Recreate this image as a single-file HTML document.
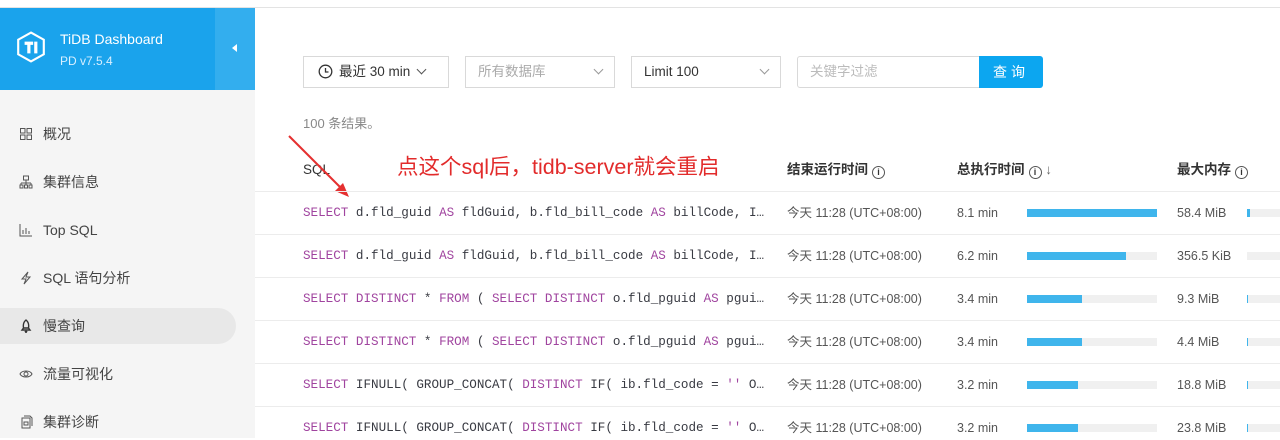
<!DOCTYPE html>
<html><head><meta charset="utf-8"><style>
*{box-sizing:border-box;margin:0;padding:0}
body{width:1280px;height:438px;overflow:hidden;background:#fff;font-family:"Liberation Sans","Noto Sans CJK SC",sans-serif;position:relative;color:#333}
.topline{position:absolute;left:0;top:0;width:1280px;height:8px;border-bottom:1px solid #e3e3e3;background:#fff}
.side{position:absolute;left:0;top:8px;width:255px;height:430px;background:#f5f5f5}
.hdr{position:absolute;left:0;top:0;width:255px;height:82px;background:#1aa3ec}
.hdr .col{position:absolute;left:215px;top:0;width:40px;height:82px;background:#33aeee}
.hdr .col:after{content:"";position:absolute;left:17px;top:36px;border-right:5px solid #fff;border-top:4px solid transparent;border-bottom:4px solid transparent}
.t1{position:absolute;left:60px;top:23px;color:#fff;font-size:14px}
.t2{position:absolute;left:60px;top:46px;color:#d8efff;font-size:12px}
.logo{position:absolute;left:16px;top:23px}
.item{position:absolute;left:0;width:236px;height:36px;font-size:14px;color:#444;line-height:36px;padding-left:43px}
.item.act{background:#e8e8e8;border-radius:0 18px 18px 0}
.ic{position:absolute;left:19px;top:11px;width:14px;height:14px}
.box{position:absolute;top:56px;height:32px;border:1px solid #d9d9d9;font-size:13.5px;line-height:30px;padding-left:12px;color:#333}
.chev{position:absolute;right:12px;top:9px;width:7px;height:7px;border-right:1px solid #999;border-bottom:1px solid #999;transform:rotate(45deg)}
.btn{position:absolute;left:979px;top:56px;width:64px;height:32px;background:#0ca6f0;color:#fff;font-size:14px;line-height:32px;text-align:center;border-radius:0 3px 3px 0;letter-spacing:4px}
.res{position:absolute;left:303px;top:113px;font-size:13px;color:#888}
.th{position:absolute;top:161px;font-size:13.5px;line-height:18px;font-weight:bold;color:#333}
.hline{position:absolute;left:255px;width:1025px;height:1px;background:#ececec}
.sql{position:absolute;left:303px;font-family:"Liberation Mono",monospace;font-size:12.6px;line-height:16px;color:#383a42;white-space:pre}
.k{color:#a0449f}
.c{position:absolute;font-size:12.5px;line-height:16px;color:#555}
.bar{position:absolute;height:8px;background:#f0f0f0}
.bar i{position:absolute;left:0;top:0;height:8px;background:#3fb5ec}
.info{display:inline-block;width:13px;height:13px;border:1.3px solid #555;border-radius:50%;font-size:9px;line-height:10px;text-align:center;font-weight:bold;vertical-align:-1px;margin-left:4px}
.ann{position:absolute;left:397px;top:153px;color:#e22b2b;font-size:21.5px;line-height:28px}
</style></head><body>
<div class="topline"></div>
<div class="side">
 <div class="hdr">
  <svg class="logo" width="30" height="32" viewBox="0 0 28 30"><path d="M14 1.5 26 8.2v13.6L14 28.5 2 21.8V8.2z" fill="none" stroke="#fff" stroke-width="2"/><path d="M8 10h8v3h-2.5v8h-3v-8H8zM17 10h3v11h-3z" fill="#fff"/></svg>
  <div class="t1">TiDB Dashboard</div><div class="t2">PD v7.5.4</div>
  <div class="col"></div>
 </div>
 <div class="item" style="top:108px"><svg class="ic" viewBox="0 0 14 14" fill="none" stroke="#555"><rect x="1.5" y="1.5" width="4.5" height="4.5"/><rect x="8" y="1.5" width="4.5" height="4.5"/><rect x="1.5" y="8" width="4.5" height="4.5"/><rect x="8" y="8" width="4.5" height="4.5"/></svg>概况</div>
 <div class="item" style="top:156px"><svg class="ic" viewBox="0 0 14 14" fill="none" stroke="#555"><rect x="4.5" y="1" width="5" height="4"/><path d="M7 5v3M2 8h10M2 8v2M7 8v2M12 8v2"/><rect x="1" y="10" width="3" height="3"/><rect x="5.5" y="10" width="3" height="3"/><rect x="10" y="10" width="3" height="3"/></svg>集群信息</div>
 <div class="item" style="top:204px"><svg class="ic" viewBox="0 0 14 14" fill="none" stroke="#555"><path d="M1 1v12h12M4 11V7M7 11V5M10 11V8"/></svg>Top SQL</div>
 <div class="item" style="top:252px"><svg class="ic" viewBox="0 0 14 14" fill="none" stroke="#555"><path d="M9 1 3 8h4l-2 5 6-7H7z"/></svg>SQL 语句分析</div>
 <div class="item act" style="top:300px"><svg class="ic" viewBox="0 0 14 14" fill="none" stroke="#333" stroke-width="1.4"><path d="M7 1c-2.5 2-3 5-2.5 8h5C10 6 9.5 3 7 1zM4.5 9 3 11h8L9.5 9M6 12l1 1.5 1-1.5"/></svg>慢查询</div>
 <div class="item" style="top:348px"><svg class="ic" viewBox="0 0 14 14" fill="none" stroke="#555"><path d="M1 7c2-4 10-4 12 0-2 4-10 4-12 0z"/><circle cx="7" cy="7" r="2"/></svg>流量可视化</div>
 <div class="item" style="top:396px"><svg class="ic" viewBox="0 0 14 14" fill="none" stroke="#555"><path d="M3 3h8v10H3zM5 1h6l2 2v8"/><path d="M5 7h4v3H5z"/></svg>集群诊断</div>
</div>

<div class="box" style="left:303px;width:146px;padding-left:14px"><svg width="15" height="15" viewBox="0 0 15 15" style="vertical-align:-3px;margin-right:6px" fill="none" stroke="#333" stroke-width="1.3"><circle cx="7.5" cy="7.5" r="6.3"/><path d="M7.5 4v4h3"/></svg>最近 30 min<span class="chev" style="position:static;display:inline-block;margin-left:8px;vertical-align:3px;border-color:#555"></span></div>
<div class="box" style="left:465px;width:150px;color:#aaa">所有数据库<span class="chev"></span></div>
<div class="box" style="left:631px;width:150px">Limit 100<span class="chev"></span></div>
<div class="box" style="left:797px;width:183px;color:#bbb;border-radius:3px 0 0 3px">关键字过滤</div>
<div class="btn">查询</div>
<div class="res">100 条结果。</div>

<div class="th" style="left:303px;font-weight:normal">SQL</div>
<div class="th" style="left:787px">结束运行时间<span class="info">i</span></div>
<div class="th" style="left:957px">总执行时间<span class="info">i</span> <span style="font-weight:normal;color:#666">↓</span></div>
<div class="th" style="left:1177px">最大内存<span class="info">i</span></div>
<div class="ann">点这个sql后，tidb-server就会重启</div>
<svg style="position:absolute;left:285px;top:133px" width="70" height="70"><path d="M4 3 58 57" stroke="#e53030" stroke-width="2"/><path d="M64 64 50 58 58 50z" fill="#e53030"/></svg>

<div class="hline" style="top:191px"></div>
<div class="hline" style="top:234px"></div>
<div class="hline" style="top:277px"></div>
<div class="hline" style="top:320px"></div>
<div class="hline" style="top:363px"></div>
<div class="hline" style="top:406px"></div>

<div class="sql" style="top:205px"><span class="k">SELECT</span> d.fld_guid <span class="k">AS</span> fldGuid, b.fld_bill_code <span class="k">AS</span> billCode, I…</div>
<div class="sql" style="top:248px"><span class="k">SELECT</span> d.fld_guid <span class="k">AS</span> fldGuid, b.fld_bill_code <span class="k">AS</span> billCode, I…</div>
<div class="sql" style="top:291px"><span class="k">SELECT DISTINCT</span> * <span class="k">FROM</span> ( <span class="k">SELECT DISTINCT</span> o.fld_pguid <span class="k">AS</span> pgui…</div>
<div class="sql" style="top:334px"><span class="k">SELECT DISTINCT</span> * <span class="k">FROM</span> ( <span class="k">SELECT DISTINCT</span> o.fld_pguid <span class="k">AS</span> pgui…</div>
<div class="sql" style="top:377px"><span class="k">SELECT</span> IFNULL( GROUP_CONCAT( <span class="k">DISTINCT</span> IF( ib.fld_code = <span class="k">''</span> O…</div>
<div class="sql" style="top:420px"><span class="k">SELECT</span> IFNULL( GROUP_CONCAT( <span class="k">DISTINCT</span> IF( ib.fld_code = <span class="k">''</span> O…</div>

<div class="c" style="left:787px;top:205px">今天 11:28 (UTC+08:00)</div><div class="c" style="left:957px;top:205px">8.1 min</div><div class="bar" style="left:1027px;top:209px;width:130px"><i style="width:130px"></i></div><div class="c" style="left:1177px;top:205px">58.4 MiB</div><div class="bar" style="left:1247px;top:209px;width:33px"><i style="width:3px"></i></div>
<div class="c" style="left:787px;top:248px">今天 11:28 (UTC+08:00)</div><div class="c" style="left:957px;top:248px">6.2 min</div><div class="bar" style="left:1027px;top:252px;width:130px"><i style="width:99px"></i></div><div class="c" style="left:1177px;top:248px">356.5 KiB</div><div class="bar" style="left:1247px;top:252px;width:33px"></div>
<div class="c" style="left:787px;top:291px">今天 11:28 (UTC+08:00)</div><div class="c" style="left:957px;top:291px">3.4 min</div><div class="bar" style="left:1027px;top:295px;width:130px"><i style="width:55px"></i></div><div class="c" style="left:1177px;top:291px">9.3 MiB</div><div class="bar" style="left:1247px;top:295px;width:33px"><i style="width:1px"></i></div>
<div class="c" style="left:787px;top:334px">今天 11:28 (UTC+08:00)</div><div class="c" style="left:957px;top:334px">3.4 min</div><div class="bar" style="left:1027px;top:338px;width:130px"><i style="width:55px"></i></div><div class="c" style="left:1177px;top:334px">4.4 MiB</div><div class="bar" style="left:1247px;top:338px;width:33px"><i style="width:1px"></i></div>
<div class="c" style="left:787px;top:377px">今天 11:28 (UTC+08:00)</div><div class="c" style="left:957px;top:377px">3.2 min</div><div class="bar" style="left:1027px;top:381px;width:130px"><i style="width:51px"></i></div><div class="c" style="left:1177px;top:377px">18.8 MiB</div><div class="bar" style="left:1247px;top:381px;width:33px"><i style="width:1px"></i></div>
<div class="c" style="left:787px;top:420px">今天 11:28 (UTC+08:00)</div><div class="c" style="left:957px;top:420px">3.2 min</div><div class="bar" style="left:1027px;top:424px;width:130px"><i style="width:51px"></i></div><div class="c" style="left:1177px;top:420px">23.8 MiB</div><div class="bar" style="left:1247px;top:424px;width:33px"><i style="width:1px"></i></div>
</body></html>
